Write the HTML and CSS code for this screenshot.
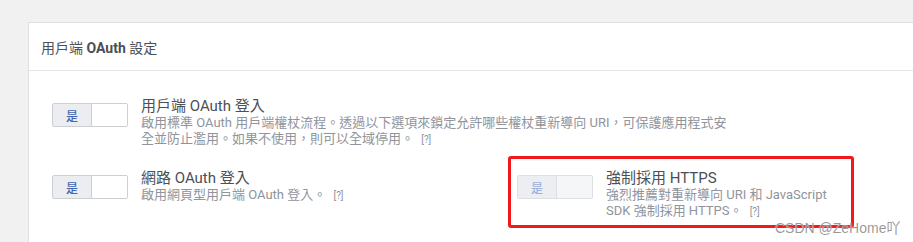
FILE: index.html
```html
<!DOCTYPE html>
<html>
<head>
<meta charset="utf-8">
<link rel="stylesheet" href="styles.css">
</head>
<body>
<div class="card">
  <div class="card-header"><span class="header-title">用戶端 <b class="latin-bold">OAuth</b> 設定</span></div>
  <div class="card-body">
    <div class="setting setting-wide">
      <div class="toggle"><span class="toggle-on">是</span><span class="toggle-off"></span></div>
      <div class="setting-text">
        <div class="setting-title">用戶端 OAuth 登入</div>
        <div class="setting-desc">啟用標準 OAuth 用戶端權杖流程。透過以下選項來鎖定允許哪些權杖重新導向 URI，可保護應用程式安全並防止濫用。如果不使用，則可以全域停用。 <span class="help">[?]</span></div>
      </div>
    </div>
    <div class="setting-row">
      <div class="setting setting-half">
        <div class="toggle"><span class="toggle-on">是</span><span class="toggle-off"></span></div>
        <div class="setting-text">
          <div class="setting-title">網路 OAuth 登入</div>
          <div class="setting-desc">啟用網頁型用戶端 OAuth 登入。 <span class="help">[?]</span></div>
        </div>
      </div>
      <div class="setting setting-half">
        <div class="toggle toggle-disabled"><span class="toggle-on">是</span><span class="toggle-off"></span></div>
        <div class="setting-text setting-text-narrow">
          <div class="setting-title">強制採用 HTTPS</div>
          <div class="setting-desc">強烈推薦對重新導向 URI 和 JavaScript SDK 強制採用 HTTPS。 <span class="help">[?]</span></div>
        </div>
      </div>
    </div>
  </div>
</div>
<div class="annotation"></div>
<div class="watermark">CSDN @ZeHome吖</div>
</body>
</html>
```

FILE: styles.css
```css
html, body {
  margin: 0;
  padding: 0;
  overflow: hidden;
}
body {
  background: #f1f1f1;
  font-family: Roboto, "Noto Sans CJK TC", sans-serif;
  color: #4b4f56;
  position: relative;
  width: 913px;
  height: 242px;
  padding: 22px 0 0 28px;
  box-sizing: border-box;
}
.card {
  width: 1000px;
  background: #fff;
  border: 1px solid #dddfe2;
  border-right: none;
  min-height: 260px;
}
.card-header {
  height: 47px;
  display: flex;
  align-items: center;
  padding-left: 12px;
  border-bottom: 1px solid #e5e6e9;
}
.header-title {
  font-size: 14px;
  color: #4b4f56;
}
.latin-bold {
  font-weight: 700;
}
.card-body {
  padding: 26px 23px;
  display: flex;
  flex-direction: column;
  gap: 21px;
}
.setting {
  display: flex;
  align-items: flex-start;
  gap: 13px;
}
.setting-row {
  display: flex;
}
.setting-half {
  width: 465px;
}
.toggle {
  margin-top: 6px;
  width: 76px;
  height: 24px;
  box-sizing: border-box;
  border: 1px solid #ccd0d5;
  border-radius: 2px;
  display: flex;
  flex-shrink: 0;
  overflow: hidden;
}
.toggle-on {
  width: 38px;
  background: #ebedf0;
  border-right: 1px solid #ccd0d5;
  color: #4267b2;
  font-size: 12px;
  display: flex;
  align-items: center;
  justify-content: center;
  font-weight: 500;
}
.toggle-off {
  flex: 1;
  background: #fff;
}
.toggle-disabled {
  border-color: #dddfe2;
}
.toggle-disabled .toggle-on {
  background: #eceef2;
  color: #9db1dc;
  border-right-color: #dddfe2;
}
.toggle-disabled .toggle-off {
  background: #f5f6f7;
}
.setting-text {
  width: 592px;
}
.setting-text-narrow {
  width: 232px;
}
.setting-title {
  font-size: 15px;
  line-height: 18px;
  color: #4b4f56;
}
.setting-desc {
  font-size: 13px;
  line-height: 16px;
  color: #90949c;
}
.help {
  font-size: 10px;
  margin-left: 4px;
  color: #90949c;
}
.annotation {
  position: absolute;
  left: 508px;
  top: 156px;
  width: 346px;
  height: 72px;
  box-sizing: border-box;
  border: 3px solid #f2191b;
  border-radius: 3px;
}
.watermark {
  position: absolute;
  left: 775px;
  top: 217px;
  font-family: "Liberation Sans", "Noto Sans CJK SC", sans-serif;
  font-size: 14px;
  color: rgba(120, 120, 120, 0.75);
  text-shadow: 0 0 1px #fff;
}
```
